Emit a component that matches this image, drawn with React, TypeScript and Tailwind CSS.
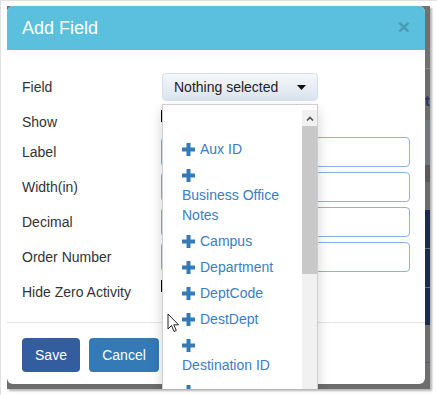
import React from "react";

const Plus = () => (
  <svg width="13" height="13" viewBox="0 0 13 13" className="inline-block shrink-0">
    <rect x="0" y="4.5" width="13" height="4" fill="#337ab7" />
    <rect x="4.5" y="0" width="4" height="13" fill="#337ab7" />
  </svg>
);

const SingleItem = ({ label }: { label: string }) => (
  <div className="py-[3px] leading-[20px] flex items-center">
    <Plus />
    <span className="ml-[5px]">{label}</span>
  </div>
);

const WrapItem = ({ lines }: { lines: string[] }) => (
  <div className="py-[3px] leading-[20px]">
    <div className="h-[20px] flex items-center">
      <Plus />
    </div>
    {lines.map((l) => (
      <div key={l} className="h-[20px]">
        {l}
      </div>
    ))}
  </div>
);

const InputRow = ({ label, first }: { label: string; first?: boolean }) => (
  <div className={`flex items-center h-[30px] ${first ? "" : "mt-[5px]"}`}>
    <div className="w-[139px]">{label}</div>
    <div className="flex-1 h-[30px] border border-[#8fb0e0] rounded-[4px] bg-white" />
  </div>
);

export default function App() {
  return (
    <div
      className="w-[437px] h-[395px] bg-white border-l border-t border-[#e2e2e2] pl-[6px] pt-[5px]"
      style={{ fontFamily: '"Liberation Sans", Arial, sans-serif' }}
    >
      <div className="w-[423px] h-[383px] relative overflow-hidden bg-[#6d6d6d] flex shadow-[2px_2px_2px_rgba(0,0,0,0.3)]">
        {/* modal */}
        <div className="w-[418px] h-[378px] shrink-0 bg-white rounded-[6px] relative flex flex-col text-[14px] text-[#333]">
          <div className="h-[44px] bg-[#5bc0de] rounded-t-[6px] flex items-center justify-between px-[15px]">
            <span className="text-[18px] text-white">Add Field</span>
            <span className="text-[21px] font-bold leading-none text-[#4a9ab3] -mt-[4px]">×</span>
          </div>
          <div className="px-[15px] pt-[23px] pb-[15px]">
            <div className="flex items-center h-[28px]">
              <div className="w-[139px]">Field</div>
              <div className="ml-px w-[156px] h-[28px] rounded-[4px] border border-[#d8e0ea] bg-gradient-to-b from-[#f5f8fb] to-[#dae3ee] flex items-center justify-between pl-[11px] pr-[11px] text-[#222]">
                <span>Nothing selected</span>
                <svg width="9" height="5" viewBox="0 0 9 5">
                  <path d="M0 0 L9 0 L4.5 5 Z" fill="#111" />
                </svg>
              </div>
            </div>
            <div className="flex h-[30px] mt-[6px]">
              <div className="w-[139px] flex items-center">Show</div>
              <div className="w-px h-[12px] bg-black mt-[3px]" />
            </div>
            <InputRow label="Label" first />
            <InputRow label="Width(in)" />
            <InputRow label="Decimal" />
            <InputRow label="Order Number" />
            <div className="flex h-[30px] mt-[5px]">
              <div className="w-[139px] flex items-center">Hide Zero Activity</div>
              <div className="w-px h-[12px] bg-black mt-[3px]" />
            </div>
          </div>
          <div className="border-t border-[#e5e5e5] px-[15px] pt-[15px] flex gap-[9px]">
            <div className="w-[58px] h-[34px] rounded-[4px] bg-[#335d9f] text-white flex items-center justify-center">
              Save
            </div>
            <div className="w-[70px] h-[34px] rounded-[4px] bg-[#337ab7] text-white flex items-center justify-center">
              Cancel
            </div>
          </div>

          {/* dropdown menu */}
          <div className="absolute left-[155px] top-[98px] w-[156px] h-[300px] bg-white border border-[#cfcfcf] shadow-[0_6px_12px_rgba(0,0,0,0.18)] pt-[5px] flex">
            <div className="flex-1 pl-[19px] text-[#3a7ec4]">
              <div className="h-[26px]" />
              <SingleItem label="Aux ID" />
              <WrapItem lines={["Business Office", "Notes"]} />
              <SingleItem label="Campus" />
              <SingleItem label="Department" />
              <SingleItem label="DeptCode" />
              <SingleItem label="DestDept" />
              <WrapItem lines={["Destination ID"]} />
              <div className="py-[3px] leading-[20px]">
                <div className="h-[20px] flex items-center">
                  <Plus />
                </div>
              </div>
            </div>
            <div className="w-[15px] flex flex-col">
              <div className="h-[16px] bg-[#f1f1f1] flex items-center justify-center">
                <svg width="8" height="5" viewBox="0 0 8 5">
                  <path d="M1 4.5 L4 1.5 L7 4.5" stroke="#505050" strokeWidth="1.6" fill="none" />
                </svg>
              </div>
              <div className="h-[148px] bg-[#c8c8c8]" />
              <div className="flex-1 bg-[#f1f1f1]" />
            </div>
          </div>

          {/* mouse cursor */}
          <svg
            className="absolute left-[160px] top-[307px]"
            width="13"
            height="20"
            viewBox="0 0 13 20"
          >
            <path
              d="M1 1 L1 16 L4.5 12.5 L7 18.5 L9.3 17.5 L6.8 11.8 L11.5 11.8 Z"
              fill="white"
              stroke="#222"
              strokeWidth="1"
              strokeLinejoin="round"
            />
          </svg>
        </div>

        {/* backdrop strip */}
        <div className="flex-1 flex flex-col">
          <div className="h-[62px] bg-[#717171]" />
          <div className="h-px bg-[#8c8c8c]" />
          <div className="h-[51px] bg-[#6d6d6d] flex flex-col justify-end pb-[12px] overflow-hidden">
            <span className="text-[14px] leading-none font-bold text-[#1f3560]">th</span>
          </div>
          <div className="h-[45px] bg-[#72767d]" />
          <div className="h-[17px] bg-[#595959]" />
          <div className="h-[28px] bg-[#6b6b6b]" />
          <div className="h-[38px] bg-[#1c2b4a]" />
          <div className="h-px bg-[#6b6b6b]" />
          <div className="h-[38px] bg-[#1c2b4a]" />
          <div className="h-px bg-[#6b6b6b]" />
          <div className="h-[37px] bg-[#1c2b4a]" />
          <div className="h-[37px] bg-[#6e6e6e]" />
          <div className="h-px bg-[#4a5a7a]" />
          <div className="flex-1 bg-[#6e6e6e]" />
        </div>
      </div>
    </div>
  );
}
